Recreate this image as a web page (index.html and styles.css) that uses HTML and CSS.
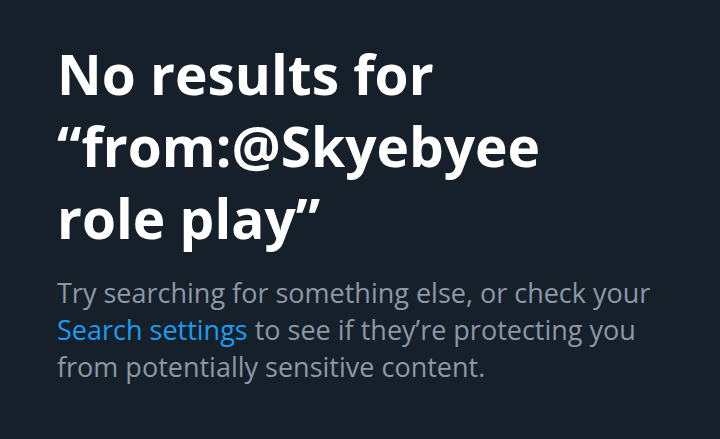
FILE: index.html
```html
<!DOCTYPE html>
<html lang="en">
<head>
<meta charset="utf-8">
<link rel="stylesheet" href="styles.css">
</head>
<body>
<main class="empty">
  <h1 class="empty-title">No results for “from:@Skyebyee role play”</h1>
  <p class="empty-text">Try searching for something else, or check your <a class="link" href="#">Search settings</a> to see if they’re protecting you from potentially sensitive content.</p>
</main>
</body>
</html>
```
FILE: styles.css
```css
html, body {
  margin: 0;
  padding: 0;
  background: #16202b;
}
body {
  width: 720px;
  height: 439px;
  overflow: hidden;
  font-family: "Open Sans", "Noto Sans", sans-serif;
}
.empty {
  padding: 38px 40px 0 57px;
  display: flex;
  flex-direction: column;
  gap: 20px;
}
.empty-title {
  margin: 0;
  color: #ffffff;
  font-size: 55px;
  line-height: 72px;
  font-weight: 700;
  max-width: 580px;
  letter-spacing: 0;
}
.empty-text {
  margin: 0;
  color: #8b98a5;
  font-size: 27px;
  line-height: 37px;
  font-weight: 400;
}
.link {
  color: #1d9bf0;
  text-decoration: none;
}
```
